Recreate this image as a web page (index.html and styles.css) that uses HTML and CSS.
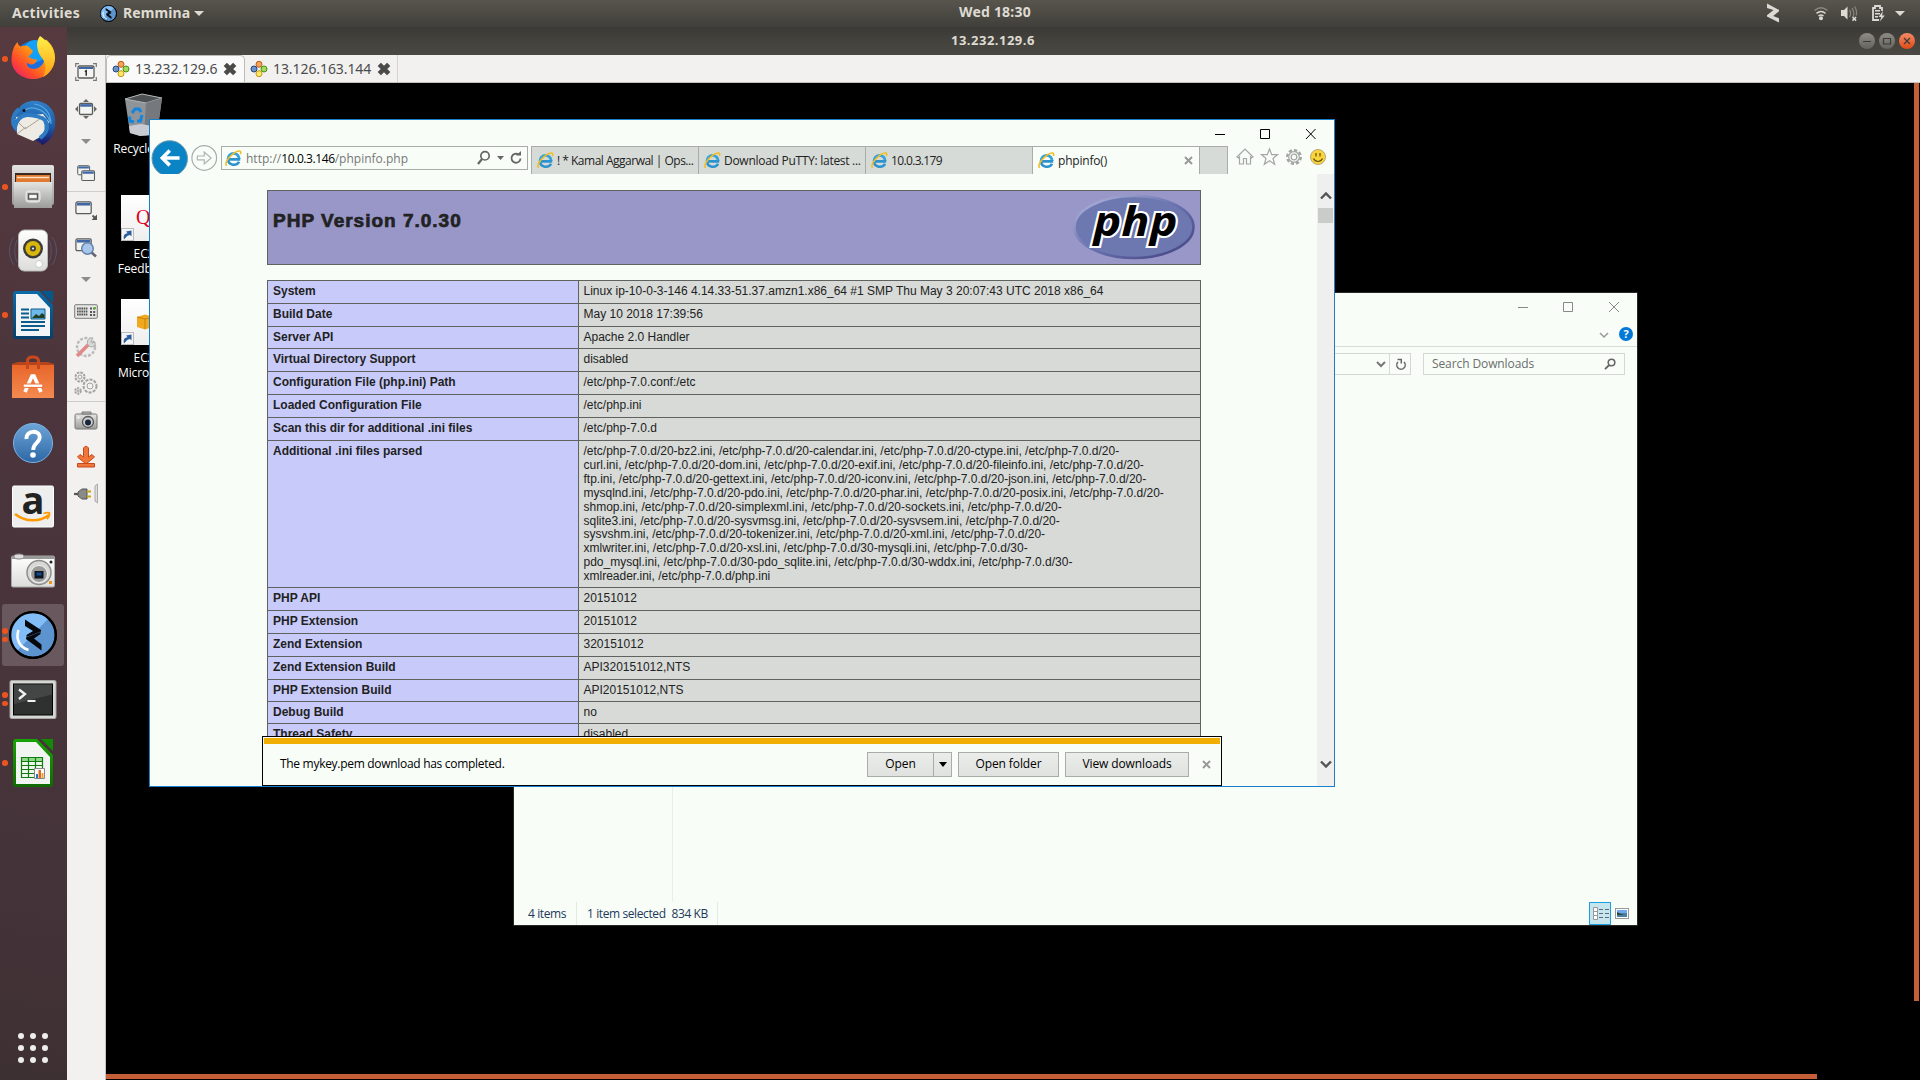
FILE: index.html
```html
<!DOCTYPE html>
<html lang="en">
<head>
<meta charset="utf-8">
<title>13.232.129.6</title>
<link rel="stylesheet" href="styles.css">
</head>
<body>
<svg class="defs" width="0" height="0">
  <defs>
    <linearGradient id="silver" x1="0" y1="0" x2="0" y2="1"><stop offset="0" stop-color="#e4e4e2"/><stop offset="1" stop-color="#9c9c9a"/></linearGradient>
    <linearGradient id="white" x1="0" y1="0" x2="0" y2="1"><stop offset="0" stop-color="#fff"/><stop offset="1" stop-color="#dcdcda"/></linearGradient>
    <linearGradient id="blueball" x1="0" y1="0" x2="0" y2="1"><stop offset="0" stop-color="#6ea5d8"/><stop offset="1" stop-color="#2d68a6"/></linearGradient>
    <linearGradient id="fox" x1="1" y1="0" x2="0" y2="1"><stop offset="0" stop-color="#ffe226"/><stop offset=".4" stop-color="#ff9a10"/><stop offset=".7" stop-color="#ff4b2b"/><stop offset="1" stop-color="#e3107c"/></linearGradient>
    <linearGradient id="flame" x1="0" y1="0" x2="0" y2="1"><stop offset="0" stop-color="#fff04a"/><stop offset="1" stop-color="#ff9f12"/></linearGradient>
    <linearGradient id="bird" x1="0" y1="0" x2="0" y2="1"><stop offset="0" stop-color="#2f7fc8"/><stop offset=".6" stop-color="#1d5aa6"/><stop offset="1" stop-color="#1b1464"/></linearGradient>
    <linearGradient id="bag" x1="0" y1="0" x2="0" y2="1"><stop offset="0" stop-color="#e8662a"/><stop offset="1" stop-color="#f48a50"/></linearGradient>
    <linearGradient id="docblue" x1="0" y1="0" x2="0" y2="1"><stop offset="0" stop-color="#0a6ca8"/><stop offset="1" stop-color="#063f6a"/></linearGradient>
    <linearGradient id="docgreen" x1="0" y1="0" x2="0" y2="1"><stop offset="0" stop-color="#18a303"/><stop offset="1" stop-color="#106802"/></linearGradient>
    <linearGradient id="rim" x1="0" y1="0" x2="1" y2="1"><stop offset="0" stop-color="#b4bbdd"/><stop offset=".5" stop-color="#6a70ae"/><stop offset="1" stop-color="#41407f"/></linearGradient>
    <symbol id="ie" viewBox="0 0 18 18">
      <path d="M3.2 9.6a5.9 6 0 1 1 11.8 0" fill="none" stroke="#35a3dc" stroke-width="3"/>
      <path d="M3.500 9.900h12.600M3.200 9.600c0 7.200 9.400 7.600 11.600 2.800" fill="none" stroke="#2d93cf" stroke-width="2.700"/>
      <path d="M1.600 16.800C-1.400 12.600 9.600.6 15.400 1c1.600.2 1.400 2.200.8 3.400" fill="none" stroke="#f2bd22" stroke-width="1.700"/>
    </symbol>
    <symbol id="win" viewBox="0 0 20 16">
      <rect x="1" y="1" width="17" height="13" rx="1.500" fill="#f2f2f0" stroke="#5a5c5a" stroke-width="1.400"/><rect x="2" y="2" width="15" height="3" fill="#3f67a5"/>
    </symbol>
    <symbol id="rdp" viewBox="0 0 18 18">
      <circle cx="9" cy="4.300" r="3" fill="#f3a35c" stroke="#b95c12"/><circle cx="4" cy="9" r="3" fill="#6c93c8" stroke="#24477f"/><circle cx="14" cy="9" r="3" fill="#9bdc5a" stroke="#4d8d16"/><circle cx="9" cy="13.700" r="3" fill="#ffe66a" stroke="#c0980c"/>
    </symbol>
    <symbol id="cross" viewBox="0 0 14 14"><path d="M2.300 2.300l9.400 9.400M11.700 2.300l-9.400 9.400" stroke="#4a4a48" stroke-width="4.600"/></symbol>
    <symbol id="remmina" viewBox="0 0 48 48">
      <circle cx="24" cy="24" r="22.800" fill="#5c94cf" stroke="#000" stroke-width="2.200"/>
      <path d="M8 40A22 22 0 0 1 39 8Z" fill="#82bdf8"/>
      <path d="M16 8.500L32 19v1.500L17.500 26v-2l6.500-4-8-5zM32.500 39.500L17 28v-1.500L31.500 21v2L25 27.500l7.500 6z" fill="#05090d"/>
      <path d="M9.500 19c-3 9 1 17.500 10 20" fill="none" stroke="#fff" stroke-width="2.600"/>
      <circle cx="24" cy="24" r="22.800" fill="none" stroke="#000" stroke-width="2.200"/>
    </symbol>
    <symbol id="shortcut" viewBox="0 0 13 13"><rect x=".5" y=".5" width="12" height="12" fill="#f4f4f4" stroke="#bbb"/><path d="M3 11.500c-1-4 .5-6 3.500-6.300L5 3.500 10.500 2.500v5.800L8.800 7c-2.300.3-3.300 1.800-5.800 4.500z" fill="#2d5f9e"/></symbol>
  </defs>
</svg>

<header class="panel">
  <span class="activities">Activities</span>
  <svg class="app-icon" viewBox="0 0 48 48"><use href="#remmina"/></svg>
  <span class="app-name">Remmina</span>
  <i class="caret light"></i>
  <span class="clock">Wed 18:30</span>
  <svg class="tray" viewBox="0 0 150 27" fill="#dcdad5">
    <path d="M2 3.500l12 6.500-12 6.800v-1.600L8.500 10 2 8zM14 22.500L2 16.500l12-7v1.800L8.200 16l5.800 2.200z"/>
    <g fill="none" stroke="#dcdad5" stroke-width="1.500"><path d="M49.500 10.500c4-3.500 9-3.500 13 0" opacity=".4"/><path d="M51.500 13.300c3-2.400 6-2.400 9 0M53.500 16c1.600-1.300 3.400-1.300 5 0"/></g><circle cx="56" cy="18.300" r="2"/>
    <path d="M76 10h3l3.500-3.500v13L79 16h-3z"/><path d="M84.500 10c1.500 2 1.500 4.500 0 7M87 8c2.500 4 2 7 1 9M89.500 6.500c2 3 2.500 6 1.800 9" fill="none" stroke="#dcdad5" opacity=".4" stroke-width="1.300"/><path d="M87.500 17l3.600 3.600M91.100 17l-3.600 3.600" stroke="#dcdad5" stroke-width="1.500"/>
    <path d="M108 20V8h2V6h5v2h2v3M107.100 20h7" fill="none" stroke="#dcdad5" stroke-width="1.800"/><path d="M110 10h5v1.400h-5zM110 13h5v1.400h-5zM110 16h3v1.400h-3zM118 11l-4.500 6h2.800l-1.500 4.500 5-6h-2.700z"/>
    <path d="M130 11h10l-5 5z"/>
  </svg>
</header>

<div class="body">
  <nav class="dock">
    <div class="launcher"><i class="dots"><b></b></i>
      <svg viewBox="0 0 48 48"><circle cx="24.500" cy="25" r="19" fill="#1a6fe0"/><circle cx="26" cy="16" r="11" fill="#12a1f6"/><path d="M8.500 7c.5 3 2 4 3.500 4.500 3-1.500 6-1.500 8 .5 1.500 1.500 3 3.500 4 3.500-.5 3-3 4-4.500 6 2 2 4.500 3 8.500 3-1 6-8 6-10 3-1 6 7 8 12 5 7-4 6-12 4-16l-3-6 6-6c5 4 9 10 9 18 0 12-9.500 21.500-21.500 21.500S2.500 36 2.500 25c0-7 2-14 6-18z" fill="url(#fox)"/><path d="M31 1c5 4 15 10 14.800 23C45 33 40 39 34 42c4-8 3-14-1-19-5-6-7-16-2-22z" fill="url(#flame)"/></svg></div>
    <div class="launcher">
      <svg viewBox="0 0 48 48"><path d="M10 9C16 0 30 0 37 5c8 5 10 13 9 22-1 10-7 17-13 19-2-6-25-8-29-17C1 22 3 13 10 9z" fill="url(#bird)"/><path d="M7 18l27-3 6 8-7 14-9 5L8 35z" fill="#eeeae4"/><path d="M6 20l10 10 19-13M8 35l9-7" fill="none" stroke="#aaa297"/><path d="M10 10c-7 6-7 14-4 18 1-6 6-13 14-12 7 1 11 1 16 5 4 8 1 14-5 18" fill="none" stroke="#2d7cc4" stroke-width="4"/><path d="M16 11c8-5 22 0 25 12M25 5c10 1 17 9 17 20" fill="none" stroke="#55a8e0" stroke-width="1.200"/><circle cx="15" cy="11.500" r="1.500" fill="#111"/></svg></div>
    <div class="launcher"><i class="dots"><b></b></i>
      <svg viewBox="0 0 48 48"><rect x="3" y="2" width="42" height="40" rx="2" fill="url(#silver)"/><rect x="6" y="10" width="36" height="10" fill="#3a2a22"/><rect x="7" y="12" width="34" height="8" fill="#e07a30"/><path d="M8 14.500h32" stroke="#ffe2c0" stroke-width="1.500"/><rect x="5" y="19" width="38" height="26" fill="url(#silver)"/><rect x="17" y="28" width="14" height="11" rx="2.500" fill="#d2d2d0" stroke="#f0f0f0"/><rect x="19.500" y="31" width="9" height="5" fill="#f8f8f8" stroke="#555" stroke-width="1.500"/></svg></div>
    <div class="launcher">
      <svg viewBox="0 0 48 48"><path d="M5 10c-6 8-6 20 0 28M43 10c6 8 6 20 0 28M8 13c-3 7-3 15 0 22M40 13c3 7 3 15 0 22" fill="none" stroke="#56617f" opacity=".7"/><rect x="9.500" y="3" width="29" height="41" rx="6" fill="url(#white)" stroke="#b8b8b6"/><circle cx="24" cy="21.500" r="10" fill="#3b3a36"/><circle cx="24" cy="21.500" r="7.600" fill="#d8b60c"/><circle cx="24" cy="21.500" r="3" fill="#444"/><circle cx="24" cy="21.500" r="1" fill="#fff"/><circle cx="30" cy="37" r="3.500" fill="#fff" stroke="#ccc"/></svg></div>
    <div class="launcher"><i class="dots"><b></b></i>
      <svg viewBox="0 0 48 48"><path d="M6 0h24l14 14v31a3 3 0 0 1-3 3H7a3 3 0 0 1-3-3V2z" fill="url(#docblue)"/><path d="M32 0h12v12z" fill="#05588c"/><path d="M7 3h21l13 14v28H7z" fill="#f2f4f5"/><path d="M12 18.500h8M12 22.500h8M12 26.500h8M12 31h24M12 35h24M12 39h18" stroke="#0d5c8e" stroke-width="1.800"/><path d="M22 18h14v10H22z" fill="#6fb9ea" stroke="#0d5c8e"/><path d="M23 27l4-4 3 2 3-3 2.500 2v3z" fill="#233f22"/></svg></div>
    <div class="launcher">
      <svg viewBox="0 -3 48 48"><path d="M3 6l6-2h30l6 2v5H3z" fill="#b5441c"/><path d="M3 7h42v33H3z" fill="url(#bag)"/><path d="M18.500 11V3q0-4 5.500-4t5.500 4v8" fill="none" stroke="#c9471c" stroke-width="3"/><path d="M16 34l7-16h2l7 16" fill="none" stroke="#fff" stroke-width="3.600"/><rect x="14" y="26" width="20" height="3.400" rx="1.700" fill="#fff" stroke="#ee6a2e"/></svg></div>
    <div class="launcher">
      <svg viewBox="0 0 48 48"><circle cx="24" cy="24" r="19.500" fill="url(#blueball)" stroke="#7ab3e6"/><path d="M17.500 20c-1-9 13-9.500 13.200-2 .1 6-6.500 6-6.500 13" fill="none" stroke="#fff" stroke-width="3.800"/><circle cx="24" cy="36" r="2.800" fill="#fff"/></svg></div>
    <div class="launcher">
      <svg viewBox="0 0 48 48"><rect x="3.500" y="3" width="41" height="41" rx="1.500" fill="#eeeeee" stroke="#fff"/><text x="24" y="30.500" text-anchor="middle" class="amazon">a</text><path d="M6 31c11 8.500 25 8 34 1" fill="none" stroke="#f90" stroke-width="2.600"/><path d="M34.500 30.500c4-1.500 6.500-1 6 0 0 2-1 4-2.500 5.500" fill="none" stroke="#f90" stroke-width="1.800"/></svg></div>
    <div class="launcher">
      <svg viewBox="0 0 48 48"><rect x="2.500" y="9" width="43" height="31" rx="1.500" fill="url(#white)" stroke="#a9a9a7"/><rect x="3" y="9" width="42" height="3" fill="#9a9a98"/><ellipse cx="10" cy="9.500" rx="5" ry="2.500" fill="#ddd" stroke="#888"/><circle cx="30" cy="25.500" r="12" fill="#d8d8d6" stroke="#8d8d8b" stroke-width="1.500"/><circle cx="30" cy="27" r="8.500" fill="#9b9b99" stroke="#f4f4f4"/><rect x="25.500" y="24" width="9" height="7.500" fill="#0e1622"/><rect x="27.500" y="25.500" width="5" height="3" fill="#124a92"/><circle cx="42" cy="15" r="1.500" fill="#222"/><rect x="40" y="34" width="3" height="3" fill="#e59a1a"/></svg></div>
    <div class="launcher active"><i class="dots"><b></b><b></b></i>
      <svg viewBox="0 0 48 48"><use href="#remmina"/></svg></div>
    <div class="launcher"><i class="dots"><b></b><b></b></i>
      <svg viewBox="0 0 48 48"><rect x="1" y="5.500" width="46" height="38" rx="1.500" fill="#d6d6d4" stroke="#a8a8a6"/><rect x="4.500" y="9" width="39" height="31" fill="#2f3130" stroke="#000"/><path d="M5 9.500h38v10L5 29z" fill="#434645"/><path d="M10 14.500l6 4.500-6 5" fill="none" stroke="#f2f2f2" stroke-width="2.300"/><path d="M18.500 26h8" stroke="#f2f2f2" stroke-width="2"/></svg></div>
    <div class="launcher"><i class="dots"><b></b></i>
      <svg viewBox="0 0 48 48"><path d="M6 0h22l16 16v29a3 3 0 0 1-3 3H7a3 3 0 0 1-3-3V2z" fill="url(#docgreen)"/><path d="M32 0h12v12z" fill="#148a04"/><path d="M7 3h20l14 15v27H7z" fill="#f2f4f2"/><path d="M12.500 18.500h21v20h-21z" fill="#eef8ec"/><path d="M12.500 18.500h21v4h-21z" fill="#8fd98a"/><path d="M12.500 18.500h21v20h-21zM12.500 22.500h21M12.500 26.500h21M12.500 30.500h21M12.500 34.500h21M19.500 18.500v20M26.500 18.500v20" fill="none" stroke="#127a10" stroke-width="1.200"/><path d="M25.500 29.500h10v10h-10z" fill="#fff" stroke="#888"/><path d="M27 35h2v4h-2z" fill="#2a78c0"/><path d="M29.500 31h2.500v8h-2.500z" fill="#e0662a"/><path d="M32.500 34h2v5h-2z" fill="#f0a020"/></svg></div>
    <div class="apps"><b></b><b></b><b></b><b></b><b></b><b></b><b></b><b></b><b></b></div>
  </nav>

  <main class="remote">
    <div class="titlebar">
      <span class="title">13.232.129.6</span>
      <div class="wm"><svg viewBox="0 0 16 16"><path d="M4 8.500h8"/></svg><svg viewBox="0 0 16 16"><path d="M4.500 5.500h7v5.500h-7z"/></svg><svg class="shut" viewBox="0 0 16 16"><path d="M5 5l6 6M11 5l-6 6"/></svg></div>
    </div>
    <div class="split">
      <aside class="tools">
        <div class="t t34"><svg width="22" height="18" viewBox="0 0 22 18"><path d="M.7 4V.7H4M18 .7h3.300V4M21.300 14v3.300H18M4 17.300H.7V14" fill="none" stroke="#777" stroke-width="1.200"/><rect x="3" y="3" width="16" height="12" rx="1.500" fill="#f4f4f2" stroke="#5a5c5a" stroke-width="1.300"/><path d="M4 4h14v2H4z" fill="#3f67a5"/><path d="M9.800 8.500l1.400-.8v5" fill="none" stroke="#222" stroke-width="1.400"/></svg></div>
        <div class="t t40"><svg width="22" height="20" viewBox="0 0 22 20"><path d="M8 3l3-3 3 3zM8 17l3 3 3-3zM3 7l-3 3 3 3zM19 7l3 3-3 3z" fill="#666"/><rect x="4.500" y="4.500" width="13" height="11" rx="1.300" fill="#f4f4f2" stroke="#5a5c5a" stroke-width="1.300"/><path d="M5.200 5.200h11.600v2.500H5.200z" fill="#3f67a5"/></svg></div>
        <div class="t t24"><i class="caret grey"></i></div>
        <div class="t t38 low"><svg width="20" height="19" viewBox="0 0 20 19"><use href="#win" width="14" height="11.200" x="1" y="1"/><use href="#win" width="15" height="12" x="5" y="6"/></svg></div>
        <div class="t t37 ruled low"><svg width="23" height="20" viewBox="0 0 23 20"><use href="#win" width="18" height="14.500" x="0" y="0"/><path d="M17.500 14.500l3 3" stroke="#555" stroke-width="1.800"/><path d="M22 13.500v5.500h-5.500z" fill="#555"/></svg></div>
        <div class="t t38 low"><svg width="23" height="20" viewBox="0 0 23 20"><use href="#win" width="18" height="14.500" x="0" y="0"/><path d="M16 14l5 4.500" stroke="#667" stroke-width="2.600"/><circle cx="12.500" cy="10.500" r="5.800" fill="#a8c6ea" stroke="#6280a8" stroke-width="1.400"/></svg></div>
        <div class="t t24 low"><i class="caret grey"></i></div>
        <div class="t t42"><svg width="24" height="15" viewBox="0 0 24 15"><rect x=".7" y=".7" width="22.600" height="13.600" rx="1" fill="#e6e6e4" stroke="#7a7a78"/><path d="M3 4.500h11M3 7.500h11M3 10.500h11" stroke="#555" stroke-width="2.200" stroke-dasharray="1.600 .6"/><path d="M16 4.500h6M16 8h6M16 11h6" stroke="#555" stroke-width="2" stroke-dasharray="2 1.200"/><path d="M20 3h2v2h-2z" fill="#5b3"/></svg></div>
        <div class="t t30"><svg width="24" height="24" viewBox="0 0 24 24"><circle cx="12" cy="12" r="9" fill="#eee" stroke="#bbb" stroke-width="2.400" stroke-dasharray="3 1.500"/><path d="M3 21l12-12" stroke="#e08a88" stroke-width="3.600"/><path d="M14 10c-2-4 1-8 5-7l-2 3 1 2 3-1c1 4-3 7-7 3z" fill="#d8d8d6" stroke="#aaa"/></svg></div>
        <div class="t t39 low"><svg width="24" height="24" viewBox="0 0 24 24" fill="none" stroke="#a2a2a0"><circle cx="6" cy="6" r="4.500" stroke-width="2" stroke-dasharray="2.500 1"/><circle cx="6" cy="6" r="2"/><circle cx="16" cy="15" r="6.500" stroke-width="2" stroke-dasharray="3 1.200"/><circle cx="16" cy="15" r="3"/><circle cx="4" cy="20" r="2.800" stroke-width="2" stroke-dasharray="2 1"/><circle cx="4" cy="20" r="1"/></svg></div>
        <div class="t t37 ruled low"><svg width="24" height="20" viewBox="0 0 24 20"><rect x="1" y="3" width="22" height="15" rx="1.500" fill="url(#silver)" stroke="#777"/><path d="M8 3V1h9v2z" fill="#bbb" stroke="#777"/><circle cx="14" cy="11" r="5.500" fill="#ccc" stroke="#555" stroke-width="1.300"/><circle cx="14" cy="11.500" r="3" fill="#18263c"/><circle cx="4.500" cy="6.500" r="1" fill="#fff"/></svg></div>
        <div class="t t34 low"><svg width="20" height="23" viewBox="0 0 20 23"><path d="M7.500 3q2.500-3.500 5 0v9l3.500-2.500 2.500 2.500-8.500 7-8.500-7L4 9.500 7.500 12zM1.500 18.500h17v3.500h-17z" fill="#f0763a" stroke="#c8481a"/></svg></div>
        <div class="t t38 lower"><svg width="24" height="24" viewBox="0 0 24 24"><path d="M0 12h5" stroke="#555" stroke-width="2.200"/><path d="M4 10l4-3h5v10H8l-4-3z" fill="#8a8a88" stroke="#555"/><path d="M13 9.500h4M13 14.500h4" stroke="#c8a80e" stroke-width="2"/><path d="M23.500 2l-2.500 2v15l2.500 2z" fill="#ddd" stroke="#aaa"/></svg></div>
      </aside>
      <section class="view">
        <div class="rtabs">
          <div class="rtab on"><svg viewBox="0 0 18 18"><use href="#rdp"/></svg><span>13.232.129.6</span><svg class="x" viewBox="0 0 14 14"><use href="#cross"/></svg></div>
          <div class="rtab"><svg viewBox="0 0 18 18"><use href="#rdp"/></svg><span>13.126.163.144</span><svg class="x" viewBox="0 0 14 14"><use href="#cross"/></svg></div>
        </div>
        <div class="desktop">
          <div class="shortcut bin"><svg width="40" height="44" viewBox="0 0 40 44"><path d="M1 6l17-5 20 4-5 37-16 1-11-3z" fill="#8e9498"/><path d="M1 6l17-5 20 4-16 5z" fill="#4d5154" stroke="#b0b5b8"/><path d="M22 10l16-5-5 35-13 3z" fill="#75797d"/><path d="M5 33l12-2 17 3-2 7-16 2-10-3z" fill="#c8ccd2"/><path d="M8 20l3-4h4l2 3M18 22l-1.500 6h-3.500M10 29l-4-1-.5-4.500" fill="none" stroke="#1585dc" stroke-width="3"/></svg><span>Recycle Bin</span></div>
          <div class="shortcut fb"><div class="tile"><span class="q">Q</span><svg class="arr" viewBox="0 0 13 13"><use href="#shortcut"/></svg></div><span>EC2<br>Feedback</span></div>
          <div class="shortcut ms"><div class="tile"><svg class="cube" viewBox="0 0 20 16"><path d="M1 3l8-2.500L18 3v9.500L9 15.500 1 13z" fill="#f0a91f"/><path d="M1 3l8 2 9-2M9 5v10" fill="none" stroke="#c98208"/></svg><svg class="arr" viewBox="0 0 13 13"><use href="#shortcut"/></svg></div><span>EC2<br>Microsoft</span></div>

          <div class="win explorer">
            <div class="caption"><svg width="102" height="12" viewBox="0 0 102 12" fill="none" stroke="#888"><path d="M1 6.500h10M46.500 1.500h9v9h-9zM92 1l10 10M102 1L92 11"/></svg></div>
            <div class="ribbon"><svg width="10" height="7" viewBox="0 0 10 7"><path d="M1 1l4 4 4-4" fill="none" stroke="#999" stroke-width="1.500"/></svg><b class="help">?</b></div>
            <div class="nav">
              <div class="path"><svg width="10" height="7" viewBox="0 0 10 7"><path d="M1 1l4 4 4-4" fill="none" stroke="#777" stroke-width="2"/></svg></div>
              <div class="reload"><svg width="12" height="13" viewBox="0 0 12 13"><path d="M3 4a4.200 4.200 0 1 0 6 0M2.500 1.500h3.800v4" fill="none" stroke="#666" stroke-width="1.500"/></svg></div>
              <div class="search"><span>Search Downloads</span><svg width="13" height="12" viewBox="0 0 13 12"><circle cx="7.500" cy="4.500" r="3.300" fill="none" stroke="#666" stroke-width="1.600"/><path d="M5.200 7L1 11.200" stroke="#666" stroke-width="1.800"/></svg></div>
            </div>
            <div class="files"></div>
            <div class="status"><span class="s1">4 items</span><span class="s2">1 item selected</span><span class="s3">834 KB</span>
              <div class="views"><svg class="v1" width="22" height="23" viewBox="0 0 22 23"><rect x=".5" y=".5" width="21" height="22" fill="#c5e6ef" stroke="#1c9fdc"/><path d="M4.500 5.500h4v4h-4zM4.500 9.500h4v4h-4zM4.500 13.500h4v4h-4z" fill="#fff" stroke="#999"/><path d="M10 7.500h4M16 7.500h4M10 11.500h4M16 11.500h4M10 15.500h4M16 15.500h4" stroke="#667"/></svg><svg width="14" height="11" viewBox="0 0 14 11"><rect x=".5" y=".5" width="13" height="10" fill="#fff" stroke="#999"/><path d="M2 2h10v3H2z" fill="#70a8f0"/><path d="M2 5h10v4H2z" fill="#4d7fa0"/><path d="M2 4l5 2.500 3 .5H2z" fill="#28493a"/></svg></div>
            </div>
          </div>

          <div class="win ie">
            <div class="caption"><svg width="102" height="12" viewBox="0 0 102 12" fill="none" stroke="#000"><path d="M1 6.500h10M46.500 1.500h9v9h-9zM92 1l9.500 10M101.500 1L92 11" /></svg></div>
            <div class="bar">
              <svg class="back" width="71" height="35" viewBox="0 0 71 35"><circle cx="19" cy="19.500" r="18" fill="#0a84c4" stroke="#6c98ac"/><path d="M29 19H12M19 11.500L11.500 19l7.500 7.500" fill="none" stroke="#fff" stroke-width="3.600"/><circle cx="54" cy="19" r="12.500" fill="#f8fdf8" stroke="#a8aba8" stroke-width="1.200"/><path d="M47 17h7v-4l7 6-7 6v-4h-7z" fill="none" stroke="#b0b3b0" stroke-width="1.200"/></svg>
              <div class="addr"><svg width="17" height="17"><use href="#ie"/></svg><span class="url">http://<b>10.0.3.146</b>/phpinfo.php</span>
                <svg class="aicons" width="46" height="16" viewBox="0 0 46 16"><circle cx="8" cy="5.800" r="4.200" fill="none" stroke="#666" stroke-width="1.700"/><path d="M5 9L1 14" stroke="#666" stroke-width="2.200"/><path d="M20 6h7l-3.500 4z" fill="#666"/><path d="M43.500 8.500a4.500 4.500 0 1 1-2-4" fill="none" stroke="#666" stroke-width="1.800"/><path d="M39 5.500h5V1z" fill="#666"/></svg></div>
              <div class="itabs">
                <div class="itab"><svg width="17" height="17"><use href="#ie"/></svg><span class="k1">! * Kamal Aggarwal | Ops...</span></div>
                <div class="itab"><svg width="17" height="17"><use href="#ie"/></svg><span class="k2">Download PuTTY: latest ...</span></div>
                <div class="itab"><svg width="17" height="17"><use href="#ie"/></svg><span class="k3">10.0.3.179</span></div>
                <div class="itab cur"><svg width="17" height="17"><use href="#ie"/></svg><span class="k4">phpinfo()</span><svg class="cx" width="9" height="9" viewBox="0 0 9 9"><path d="M1 1l7 7M8 1L1 8" stroke="#999" stroke-width="2"/></svg></div>
                <div class="newtab"></div>
              </div>
              <svg class="cmds" width="92" height="20" viewBox="0 0 92 20"><g fill="none" stroke="#a3a6a3" stroke-width="1.200"><path d="M1 10l8-8 8 8-1.500 1L14.500 10v7h-4v-5.500h-3V17h-4v-7L2.500 11z"/><path d="M33.500 2l2.200 5.700h5.800L37 11.500l1.700 5.800-5.200-3.500-5.200 3.500 1.700-5.800-4.500-3.800h5.800z"/><circle cx="58" cy="10" r="2.800"/><circle cx="58" cy="10" r="6.800" stroke-width="2.400" stroke-dasharray="3.300 2"/><circle cx="58" cy="10" r="5.300"/></g><circle cx="82" cy="10" r="7.500" fill="#fbd43c" stroke="#b8a878"/><path d="M80 6v3.500M84 6v3.500M77.500 11.500c2 4 7 4 9 0" fill="none" stroke="#5e5010" stroke-width="1.200"/></svg>
            </div>
            <div class="page">
              <div class="doc">
                <div class="phphead"><h1>PHP Version 7.0.30</h1>
                  <svg width="124" height="68" viewBox="0 0 124 68"><ellipse cx="62" cy="34" rx="59.500" ry="31" fill="#6d77b0" stroke="url(#rim)" stroke-width="2.600"/><text x="63.500" y="43" text-anchor="middle" textLength="84" lengthAdjust="spacingAndGlyphs" class="php">php</text></svg>
                </div>
                <div class="info">
                  <div class="r23"><b>System</b><span class="sys">Linux ip-10-0-3-146 4.14.33-51.37.amzn1.x86_64 #1 SMP Thu May 3 20:07:43 UTC 2018 x86_64</span></div>
                  <div class="r23"><b>Build Date</b><span>May 10 2018 17:39:56</span></div>
                  <div class="r22"><b>Server API</b><span>Apache 2.0 Handler</span></div>
                  <div class="r23"><b>Virtual Directory Support</b><span>disabled</span></div>
                  <div class="r23"><b>Configuration File (php.ini) Path</b><span>/etc/php-7.0.conf:/etc</span></div>
                  <div class="r23"><b>Loaded Configuration File</b><span>/etc/php.ini</span></div>
                  <div class="r23"><b>Scan this dir for additional .ini files</b><span>/etc/php-7.0.d</span></div>
                  <div class="r147"><b>Additional .ini files parsed</b><span>/etc/php-7.0.d/20-bz2.ini, /etc/php-7.0.d/20-calendar.ini, /etc/php-7.0.d/20-ctype.ini, /etc/php-7.0.d/20-<br>curl.ini, /etc/php-7.0.d/20-dom.ini, /etc/php-7.0.d/20-exif.ini, /etc/php-7.0.d/20-fileinfo.ini, /etc/php-7.0.d/20-<br>ftp.ini, /etc/php-7.0.d/20-gettext.ini, /etc/php-7.0.d/20-iconv.ini, /etc/php-7.0.d/20-json.ini, /etc/php-7.0.d/20-<br>mysqlnd.ini, /etc/php-7.0.d/20-pdo.ini, /etc/php-7.0.d/20-phar.ini, /etc/php-7.0.d/20-posix.ini, /etc/php-7.0.d/20-<br>shmop.ini, /etc/php-7.0.d/20-simplexml.ini, /etc/php-7.0.d/20-sockets.ini, /etc/php-7.0.d/20-<br>sqlite3.ini, /etc/php-7.0.d/20-sysvmsg.ini, /etc/php-7.0.d/20-sysvsem.ini, /etc/php-7.0.d/20-<br>sysvshm.ini, /etc/php-7.0.d/20-tokenizer.ini, /etc/php-7.0.d/20-xml.ini, /etc/php-7.0.d/20-<br>xmlwriter.ini, /etc/php-7.0.d/20-xsl.ini, /etc/php-7.0.d/30-mysqli.ini, /etc/php-7.0.d/30-<br>pdo_mysql.ini, /etc/php-7.0.d/30-pdo_sqlite.ini, /etc/php-7.0.d/30-wddx.ini, /etc/php-7.0.d/30-<br>xmlreader.ini, /etc/php-7.0.d/php.ini</span></div>
                  <div class="r23"><b>PHP API</b><span>20151012</span></div>
                  <div class="r23"><b>PHP Extension</b><span>20151012</span></div>
                  <div class="r23"><b>Zend Extension</b><span>320151012</span></div>
                  <div class="r23"><b>Zend Extension Build</b><span>API320151012,NTS</span></div>
                  <div class="r22"><b>PHP Extension Build</b><span>API20151012,NTS</span></div>
                  <div class="r22"><b>Debug Build</b><span>no</span></div>
                  <div class="r23"><b>Thread Safety</b><span>disabled</span></div>
                </div>
              </div>
              <div class="scroll"><svg width="12" height="9" viewBox="0 0 12 9"><path d="M1 7.500l5-5 5 5" fill="none" stroke="#555" stroke-width="2.400"/></svg><i class="thumb"></i><svg class="dn" width="12" height="9" viewBox="0 0 12 9"><path d="M1 1.500l5 5 5-5" fill="none" stroke="#555" stroke-width="2.400"/></svg></div>
              <div class="toast">
                <span class="msg">The mykey.pem download has completed.</span>
                <div class="btn open"><span>Open</span><i><em class="caret black"></em></i></div>
                <div class="btn folder"><span>Open folder</span></div>
                <div class="btn dl"><span>View downloads</span></div>
                <svg width="9" height="9" viewBox="0 0 9 9"><path d="M1 1l7 7M8 1L1 8" stroke="#999" stroke-width="2"/></svg>
              </div>
            </div>
          </div>
          <i class="edge right"></i><i class="edge bottom"></i>
        </div>
      </section>
    </div>
  </main>
</div>
</body>
</html>
```
FILE: styles.css
```css
* { box-sizing: border-box; }
body { margin: 0; width: 1920px; height: 1080px; overflow: hidden; background: #000; font: 12px/16px "Open Sans", "Noto Sans", sans-serif; display: flex; flex-direction: column; }
.defs { position: absolute; }
svg { flex: none; display: block; }
span { white-space: nowrap; }

.caret { width: 0; height: 0; border: 5px solid transparent; border-bottom: 0; border-top-color: #dcdad5; flex: none; }
.caret.grey { border-top-color: #8c8c8a; }
.caret.black { border-width: 4px; border-bottom: 0; border-top: 5px solid #000; }

/* Top panel */
.panel { height: 27px; flex: none; display: flex; align-items: center; position: relative; padding: 0 0 1px 12px; background: linear-gradient(#58554d, #403f3a); color: #dfdbd2; font: bold 14px/24px "Noto Sans", sans-serif; }
.activities { width: 88px; letter-spacing: .3px; }
.app-icon { width: 17px; height: 17px; margin-right: 6px; }
.app-name { width: 71px; letter-spacing: .1px; }
.clock { position: absolute; left: 959px; top: 0; letter-spacing: .2px; }
.tray { width: 150px; height: 27px; position: absolute; left: 1765px; top: 0; }

.body { flex: 1; display: flex; min-height: 0; }

/* Dock */
.dock { width: 67px; background: linear-gradient(190deg, #563a40 0, #4c353c 35%, #45333a 80%, #3d3032 100%); display: flex; flex-direction: column; }
.launcher { height: 64px; flex: none; position: relative; display: flex; align-items: center; justify-content: center; padding: 2px 1px 0 0; }
.launcher:first-child { margin-top: -1px; }
.launcher svg { width: 48px; height: 48px; z-index: 1; overflow: visible; }
.launcher.active::before { content: ""; position: absolute; left: 2px; top: 2px; width: 62px; height: 62px; border-radius: 3px; background: #69585d; }
.dots { position: absolute; left: 2px; top: 0; height: 66px; display: flex; flex-direction: column; gap: 3px; justify-content: center; z-index: 2; }
.dots b { width: 5.500px; height: 5.500px; border-radius: 50%; background: #e95420; }
.amazon { font: bold 38px "Open Sans", sans-serif; fill: #222; }
.apps { margin: auto 0 17px 18px; display: grid; grid-template-columns: repeat(3, 6px); gap: 6px; }
.apps b { width: 6px; height: 6px; border-radius: 50%; background: #eee; }

/* Remote client window */
.remote { flex: 1; display: flex; flex-direction: column; }
.titlebar { height: 28px; flex: none; background: linear-gradient(#3b3a36, #4b4943); color: #dfdbd2; font: bold 13px/26px "Noto Sans", sans-serif; position: relative; display: flex; align-items: center; justify-content: flex-end; padding-right: 5px; }
.title { position: absolute; left: 884px; top: 0; letter-spacing: .5px; }
.title { letter-spacing: .5px; }
.wm { display: flex; gap: 4px; }
.wm svg { width: 16px; height: 16px; border-radius: 50%; background: linear-gradient(#8d8b84, #65635e); fill: none; stroke: #3c3b37; stroke-width: 1.200px; }
.wm .shut { background: linear-gradient(#f68b68, #df4a16); }
.split { flex: 1; display: flex; min-height: 0; }
.tools { width: 39px; background: #f2f1f0; border-right: 1px solid #c4c2bf; }
.t { display: flex; align-items: center; justify-content: center; }
.low { padding-top: 2px; }
.lower { padding-top: 5px; }
.t24 { height: 24px; } .t30 { height: 30px; } .t34 { height: 34px; } .t37 { height: 37px; } .t38 { height: 38px; }
.t39 { height: 39px; } .t40 { height: 40px; } .t42 { height: 42px; }
.ruled { border-top: 1px solid #cfcdca; }
.view { flex: 1; display: flex; flex-direction: column; }
.rtabs { height: 28px; flex: none; background: #f2f1f0; border-bottom: 1px solid #c4c2bf; display: flex; color: #4c4c4c; font: 14px/20px "Noto Sans", sans-serif; }
.rtab { width: 153px; display: flex; align-items: center; padding-left: 5px; border-right: 1px solid #d4d2cf; }
.rtab.on { width: 139px; background: #fafafa; border: 1px solid #bdbbb8; border-bottom: 0; border-radius: 5px 5px 0 0; }
.rtab svg { width: 18px; height: 18px; margin-right: 5px; }
.rtab .x { width: 14px; height: 14px; margin: 0 0 0 6px; }
.rtab span { letter-spacing: -.08px; }

.desktop { flex: 1; position: relative; overflow: hidden; background: #000; }
.edge { position: absolute; background: #c55f38; }
.edge.right { left: 1808px; top: 0; width: 5px; height: 918px; }
.edge.bottom { left: 0; bottom: 1px; width: 1711px; height: 5px; }

/* Desktop shortcuts */
.shortcut { position: absolute; left: 0; width: 76px; display: flex; flex-direction: column; align-items: center; color: #fff; text-align: center; line-height: 15px; letter-spacing: -.1px; }
.bin { top: 10px; gap: 4px; }
.fb { top: 112px; gap: 5px; }
.ms { top: 216px; gap: 5px; }
.tile { width: 46px; height: 46px; background: linear-gradient(#fff, #eee); position: relative; }
.q { position: absolute; left: 15px; top: 12px; color: #e2001a; font: 20px/20px "Liberation Serif", serif; }
.cube { position: absolute; left: 15px; top: 15px; width: 20px; height: 16px; }
.arr { position: absolute; left: 0; bottom: 0; width: 13px; height: 13px; }

/* Remote windows */
.win { position: absolute; background: #f8fdf8; display: flex; flex-direction: column; }
.caption { display: flex; justify-content: flex-end; }
.explorer { left: 407px; top: 209px; width: 1125px; height: 634px; border: 1px solid #262826; }
.explorer .caption { height: 31px; padding: 8px 18px 0 0; }
.ribbon { height: 23px; border-bottom: 1px solid #d8dbd8; display: flex; justify-content: flex-end; gap: 10px; padding: 3px 4px 0 0; }
.ribbon svg { margin-top: 5px; }
.help { width: 14px; height: 14px; border-radius: 50%; background: #0078d7; color: #fff; font-size: 11px; line-height: 14px; text-align: center; }
.nav { height: 22px; margin: 6px 12px 0; display: flex; }
.path { flex: 1; border: 1px solid #d5d8d5; display: flex; align-items: center; justify-content: flex-end; padding: 1px 3px 0 0; }
.reload { width: 21px; border: 1px solid #d5d8d5; border-left: 0; display: flex; align-items: center; justify-content: center; padding-left: 1px; }
.search { width: 202px; margin-left: 12px; border: 1px solid #d5d8d5; display: flex; align-items: center; justify-content: space-between; padding: 0 7px 0 8px; color: #6b6e6b; letter-spacing: -.1px; }
.files { width: 159px; flex: 1; border-right: 1px solid #eceeec; }
.status { height: 23px; flex: none; display: flex; color: #1e395b; line-height: 23px; padding-left: 14px; letter-spacing: -.4px; }
.s1 { width: 49px; border-right: 1px solid #e6e8e6; margin-right: 10px; }
.s2 { width: 84.500px; }
.s3 { width: 46px; border-right: 1px solid #e6e8e6; }
.views { margin-left: auto; padding-right: 8px; display: flex; gap: 4px; align-items: center; }

.ie { left: 43px; top: 36px; width: 1186px; height: 668px; border: 1px solid #1a7fcb; }
.ie .caption { height: 19px; padding: 8px 18px 0 0; }
.bar { height: 35px; flex: none; display: flex; }
.back { margin-left: 1px; width: 70px; }
.addr { width: 307px; height: 24px; margin-top: 7px; border: 1px solid #a9aca9; display: flex; align-items: center; padding-left: 3px; }
.url { color: #777; margin-left: 4px; flex: 1; padding-top: 1px; font: 12px/16px "Open Sans", sans-serif; }
.url b { color: #000; font-weight: normal; letter-spacing: -.4px; }
.aicons { margin-right: 4px; }
.itabs { margin: 7px 0 0 3px; height: 28px; display: flex; border-top: 1px solid #a9aca9; border-left: 1px solid #a9aca9; }
.itab { width: 167px; background: #d7dbd7; border-right: 1px solid #a9aca9; display: flex; align-items: center; padding-left: 5px; color: #222; }
.itab span { margin-left: 3px; letter-spacing: -.2px; }
.itab .k1 { letter-spacing: -.5px; }
.itab .k2 { letter-spacing: -.28px; }
.itab .k3 { letter-spacing: -.65px; }
.itab.cur { background: #f8fdf8; }
.itab .cx { margin: 0 6px 0 auto; }
.newtab { width: 28px; background: #d7dbd7; border-right: 1px solid #a9aca9; }
.cmds { margin: 8px 0 0 8px; }

.page { flex: 1; display: flex; position: relative; overflow: hidden; font-family: "Liberation Sans", Arial, sans-serif; color: #222; }
.doc { width: 934px; margin-left: 117px; padding-top: 16px; }
.phphead { height: 75px; border: 1px solid #5f625f; background: #9897c8; display: flex; justify-content: space-between; margin-bottom: 15px; }
h1 { margin: 19px 0 0 5px; font-size: 19px; line-height: 22px; letter-spacing: 1px; -webkit-text-stroke: .7px #222; }
.phphead svg { margin: 2px 4px 0 0; overflow: visible; }
.php { font: italic bold 41px/1 "Noto Sans", sans-serif; fill: #000; stroke: #fff; stroke-width: 4px; paint-order: stroke; }
.info { border-top: 1px solid #5f625f; font-size: 12px; line-height: 13.900px; }
.info > div { display: flex; border: 1px solid #5f625f; border-top: 0; background: #d7dad7; }
.info b { width: 311px; background: #c8cbfa; border-right: 1px solid #5f625f; padding: 4px 0 0 5px; flex: none; }
.info span { padding: 4px 0 0 4.500px; }
.r22 { height: 22px; } .r23 { height: 23px; } .r147 { height: 147px; }
.scroll { width: 17px; margin-left: auto; background: #efefef; display: flex; flex-direction: column; align-items: center; padding-top: 17px; }
.thumb { width: 15px; height: 15px; background: #c9ccc9; margin-top: 8px; }
.dn { margin: auto 0 17px; }

.toast { position: absolute; left: 112px; bottom: 0; width: 960px; height: 50px; border: 1px solid #000; background: linear-gradient(#f0ae00, #f0ae00) 1px 1px / 956px 6px no-repeat #f8fdf8; display: flex; align-items: center; padding: 6px 10px 0 17px; color: #000; font: 12px/16px "Open Sans", sans-serif; }
.msg { letter-spacing: -.3px; margin: -1px auto 0 0; }
.btn { height: 25px; border: 1px solid #a9aca9; background: linear-gradient(#ebedeb, #dfe2df); display: flex; align-items: center; justify-content: center; margin-right: 6px; letter-spacing: -.1px; }
.btn.open { width: 85px; }
.open span { flex: 1; text-align: center; }
.open i { width: 18px; height: 23px; border-left: 1px solid #a9aca9; display: flex; align-items: center; justify-content: center; }
.folder { width: 101px; }
.btn.dl { width: 124px; margin-right: 13px; }
```
